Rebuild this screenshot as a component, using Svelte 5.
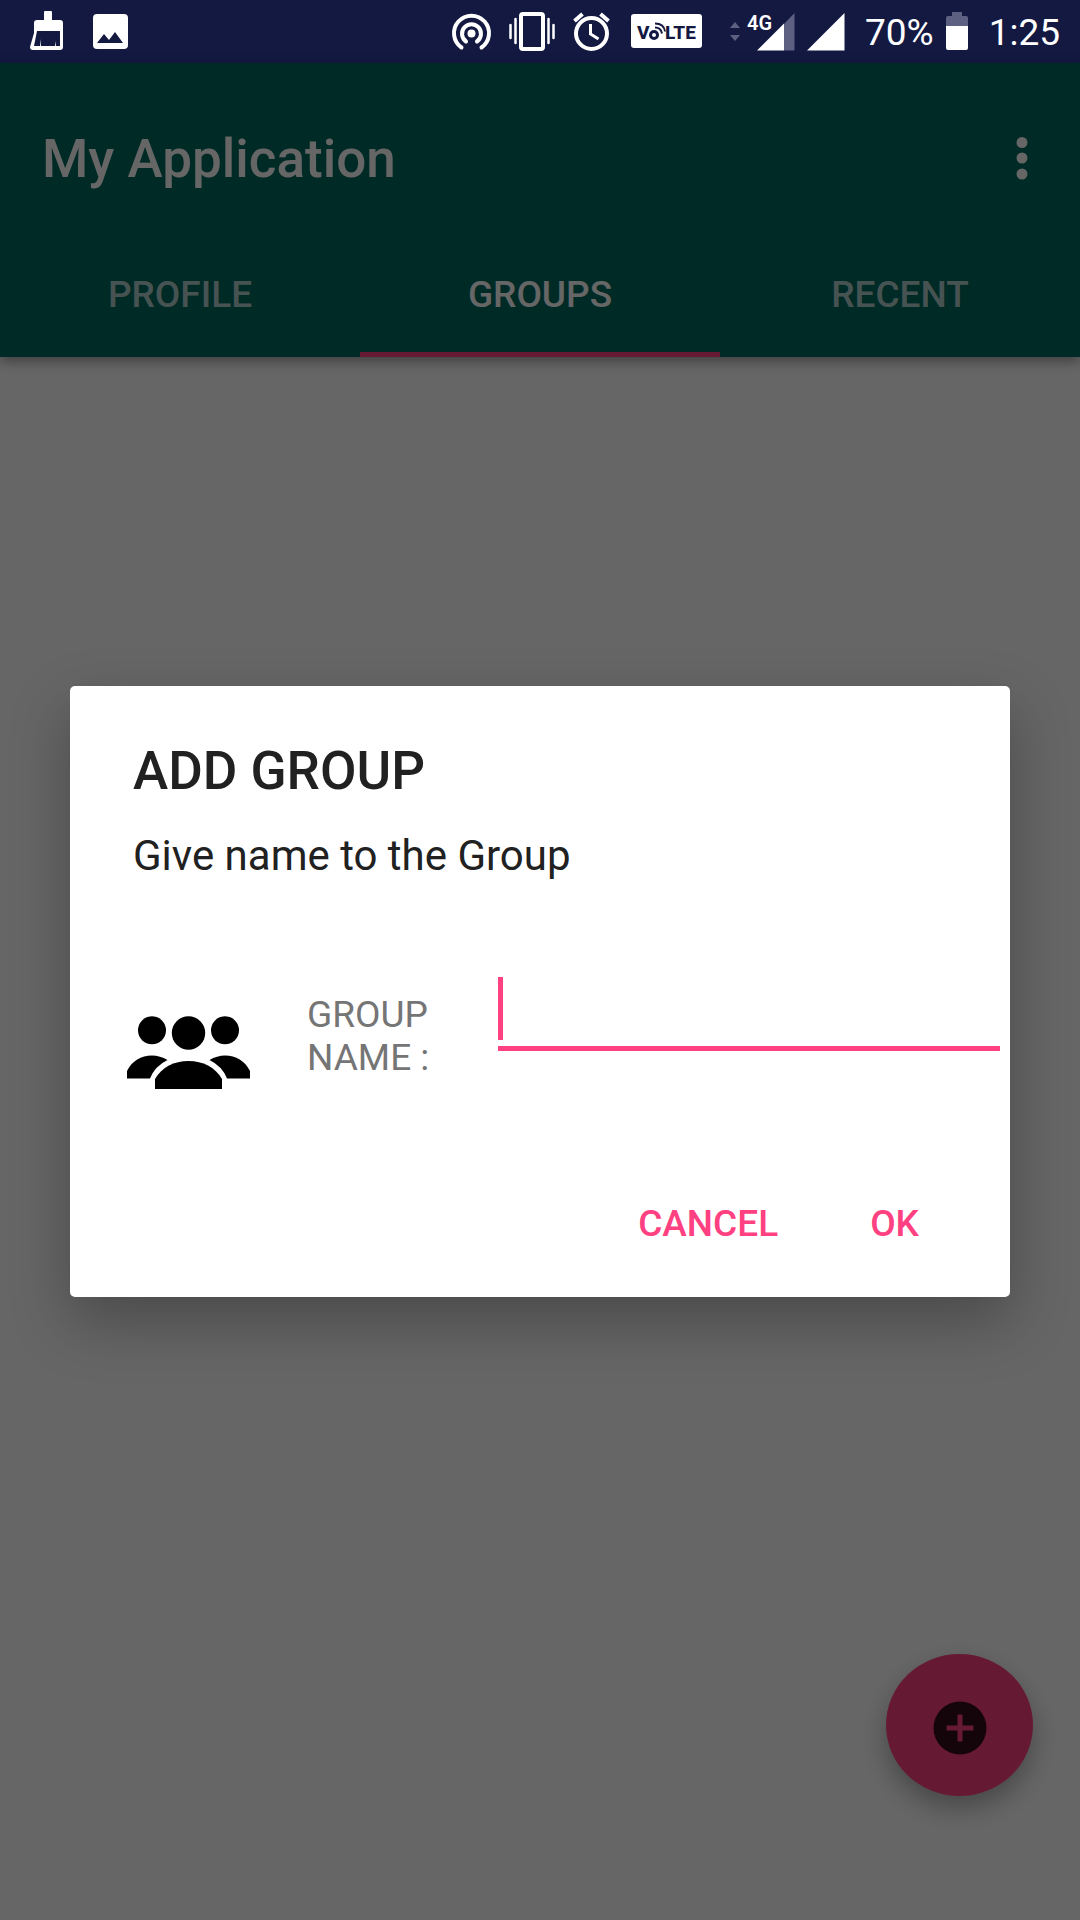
<script>
  const tabs = ['Profile', 'Groups', 'Recent'];
  let active = $state('Groups');
  let groupName = $state('');
</script>

<div class="screen">
  <header class="status">
    <div class="cluster">
      <svg width="46" height="63" viewBox="24 0 46 63" aria-hidden="true">
        <path fill="#fff" fill-rule="evenodd" d="M44 12q0-1 1-1h6q1 0 1 1v8h8q3 0 3 3v24q0 3-3 3H33q-3 0-3-3l4-14V23q0-3 3-3h7zM37 31l-3 15h6l1-7v7h14l1-5v5h4V31z" />
      </svg>
      <svg width="36" height="63" viewBox="93 0 36 63" aria-hidden="true">
        <rect x="93" y="14" width="35" height="35" rx="4" fill="#fff" />
        <path class="navy" d="M97 43l7-9 5 6 6-8 8 11z" />
      </svg>
    </div>
    <div class="cluster right">
      <svg width="46" height="63" viewBox="447 0 46 63" fill="none" stroke="#fff" stroke-width="4" stroke-linecap="round" aria-hidden="true">
        <path d="M459.500 47.500a17.500 17.500 0 1 1 20 0" />
        <path d="M464 41.500a9.500 9.500 0 1 1 11 0" />
        <circle cx="469.500" cy="33.500" r="4" fill="#fff" stroke="none" />
      </svg>
      <svg width="57" height="63" viewBox="503 0 57 63" fill="none" stroke="#fff" aria-hidden="true">
        <rect x="519" y="14" width="22" height="35" rx="2" stroke-width="4" />
        <path stroke-width="2.500" stroke-linecap="round" d="M513.500 19v24M508.500 25v13M546.500 19v24M551.500 25v13" />
      </svg>
      <svg width="42" height="63" viewBox="570 0 42 63" fill="none" stroke="#fff" stroke-width="4" aria-hidden="true">
        <circle cx="589.500" cy="33.500" r="15.500" />
        <path d="M572.500 21l8-7M606.500 21l-8-7" />
        <path stroke-width="3" d="M588.500 24v10l8 5" />
      </svg>
      <svg width="88" height="63" viewBox="622 0 88 63" aria-hidden="true">
        <rect x="629" y="14" width="71" height="34" rx="3" fill="#fff" />
        <text class="volte" x="635" y="39">V</text>
        <text class="volte" x="663" y="39">LTE</text>
        <g fill="none" stroke="#141942">
          <circle cx="652" cy="35" r="3.500" stroke-width="3" />
          <path stroke-width="2" d="M653 27.500q6 0 7 6M653 23.500q9 0 10 8" />
        </g>
      </svg>
      <svg width="74" height="63" viewBox="720 0 74 63" aria-hidden="true">
        <path fill="#5e6082" d="M733 22l5 6h-10zM733 41l5-6h-10zM782 24l10.500-11v37.500H782z" />
        <path fill="#fff" d="M755 50.500L782 23.500V50.500z" />
        <text class="net" x="745" y="30">4G</text>
      </svg>
      <svg width="49" height="63" viewBox="804 0 49 63" aria-hidden="true">
        <path fill="#fff" d="M805 50.500L842.500 13V50.500z" />
      </svg>
      <span>70%</span>
      <svg width="35" height="63" viewBox="943 0 35 63" aria-hidden="true">
        <path fill="#5e6082" d="M951 12h10v4h4q2 0 2 2v8h-22v-8q0-2 2-2h4z" />
        <path fill="#fff" d="M945 26h22v22q0 2-2 2h-18q-2 0-2-2z" />
      </svg>
      <span>1:25</span>
    </div>
  </header>

  <div class="appbar">
    <div class="toolbar">
      <h1>My Application</h1>
      <button class="more" aria-label="More options">
        <svg width="12" height="44" viewBox="0 0 12 44" fill="#fff">
          <circle cx="6" cy="5.500" r="5.500" /><circle cx="6" cy="21" r="5.500" /><circle cx="6" cy="37" r="5.500" />
        </svg>
      </button>
    </div>
    <nav>
      {#each tabs as tab}
        <button class="tab" class:active={tab === active} onclick={() => (active = tab)}>{tab}</button>
      {/each}
    </nav>
  </div>

  <main></main>

  <button class="fab" aria-label="Add group">
    <svg width="54" height="54" viewBox="0 0 54 54">
      <path fill="#330d1a" fill-rule="evenodd" d="M27 .5a26.500 26.500 0 1 0 0 53a26.500 26.500 0 1 0 0-53zM24.500 13.500h5v11h11v5h-11v11h-5v-11h-11v-5h11z" />
    </svg>
  </button>

  <div class="scrim">
    <form class="dialog" role="dialog" aria-labelledby="dialog-title" onsubmit={(e) => e.preventDefault()}>
      <h2 id="dialog-title">ADD GROUP</h2>
      <p>Give name to the Group</p>
      <div class="field">
        <svg class="people" width="123" height="73" viewBox="127 1016 123 73" aria-hidden="true">
          <circle cx="152" cy="1030.300" r="14" />
          <circle cx="225" cy="1030.300" r="14" />
          <circle cx="188.500" cy="1033" r="16.700" />
          <path d="M155 1089V1079C162 1067 174 1061 188.500 1061S215 1067 222 1079V1089Z" />
          <path d="M127 1078.500V1071C132 1061 141 1055.500 152 1055.500Q160 1055.500 167.500 1060Q155 1066 150 1078.500Z" />
          <path d="M250 1078.500V1071C245 1061 236 1055.500 225 1055.500Q217 1055.500 209.500 1060Q222 1066 227 1078.500Z" />
        </svg>
        <label for="group-name">GROUP NAME :</label>
        <input id="group-name" type="text" autocomplete="off" bind:value={groupName} />
      </div>
      <div class="actions">
        <button type="button">CANCEL</button>
        <button type="submit">OK</button>
      </div>
    </form>
  </div>
</div>

<style>
  :global(body) {
    margin: 0;
    background: #fff;
  }
  .screen {
    position: relative;
    display: flex;
    flex-direction: column;
    min-height: 100vh;
    font-family: Roboto, 'Noto Sans', sans-serif;
  }
  svg {
    display: block;
    flex: none;
  }
  h1, h2, p {
    margin: 0;
  }
  button {
    border: 0;
    background: none;
    font-family: inherit;
    cursor: pointer;
  }

  .status {
    display: flex;
    justify-content: space-between;
    height: 63px;
    padding: 0 20px 0 24px;
    background: #141942;
    color: #fff;
    font-size: 37px;
    line-height: 66px;
  }
  .cluster {
    display: flex;
    gap: 23px;
  }
  .right {
    gap: 10px;
  }
  .navy {
    fill: #141942;
  }
  .volte {
    fill: #141942;
    font-size: 19px;
    font-weight: 800;
  }
  .net {
    fill: #fff;
    font-size: 20px;
    font-weight: 600;
  }

  .appbar {
    background: #00695c;
    color: #fff;
    box-shadow: 0 4px 12px rgba(0, 0, 0, 0.4);
  }
  .toolbar {
    display: flex;
    align-items: center;
    justify-content: space-between;
    height: 191px;
    padding: 0 32px 0 42px;
  }
  h1 {
    font-size: 53px;
    line-height: 64px;
    font-weight: 500;
  }
  .more {
    display: flex;
    justify-content: center;
    width: 52px;
    padding: 20px;
  }
  nav {
    display: grid;
    grid-template-columns: repeat(3, 1fr);
  }
  .tab {
    height: 103px;
    padding: 0 0 16px;
    border-bottom: 5px solid transparent;
    color: rgba(255, 255, 255, 0.7);
    font-size: 37px;
    line-height: 44px;
    font-weight: 500;
    text-transform: uppercase;
  }
  .tab.active {
    border-color: #ff4081;
    color: #fff;
  }
  main {
    flex: 1;
  }

  .fab {
    position: absolute;
    right: 47px;
    bottom: 124px;
    display: flex;
    align-items: center;
    justify-content: center;
    width: 147px;
    height: 142px;
    padding: 5px 0 0;
    border-radius: 50%;
    background: #ff4081;
    box-shadow: 0 12px 26px rgba(0, 0, 0, 0.3);
  }

  .scrim {
    position: absolute;
    inset: 63px 0 0;
    display: flex;
    align-items: center;
    padding: 0 70px;
    background: rgba(0, 0, 0, 0.6);
  }
  .dialog {
    flex: 1;
    min-width: 0;
    padding: 53px 10px 19px 63px;
    border-radius: 5px;
    background: #fff;
    box-shadow: 0 24px 60px rgba(0, 0, 0, 0.28);
    box-sizing: border-box;
    color: #212121;
  }
  h2 {
    font-size: 53px;
    line-height: 64px;
    font-weight: 500;
  }
  p {
    margin-top: 28px;
    font-size: 42px;
    line-height: 50px;
  }
  .field {
    display: flex;
    align-items: flex-start;
    height: 112px;
    margin: 96px 0 81px -6px;
  }
  .people {
    align-self: flex-end;
  }
  label {
    width: 136px;
    margin: 16px 55px 0 57px;
    color: #757575;
    font-size: 37px;
    line-height: 43px;
  }
  input {
    flex: 1;
    min-width: 0;
    height: 74px;
    padding: 0 8px;
    border: 0;
    border-bottom: 5px solid #ff4081;
    border-radius: 0;
    outline: 0;
    box-sizing: border-box;
    background: linear-gradient(#ff4081, #ff4081) 0 0 / 5px 63px no-repeat;
    caret-color: #ff4081;
    color: #212121;
    font: 42px/50px Roboto, sans-serif;
  }
  .actions {
    display: flex;
    justify-content: flex-end;
    gap: 44px;
    padding-right: 57px;
  }
  .actions button {
    padding: 32px 24px;
    color: #ff4081;
    font-size: 37px;
    line-height: 44px;
    font-weight: 500;
  }
</style>
